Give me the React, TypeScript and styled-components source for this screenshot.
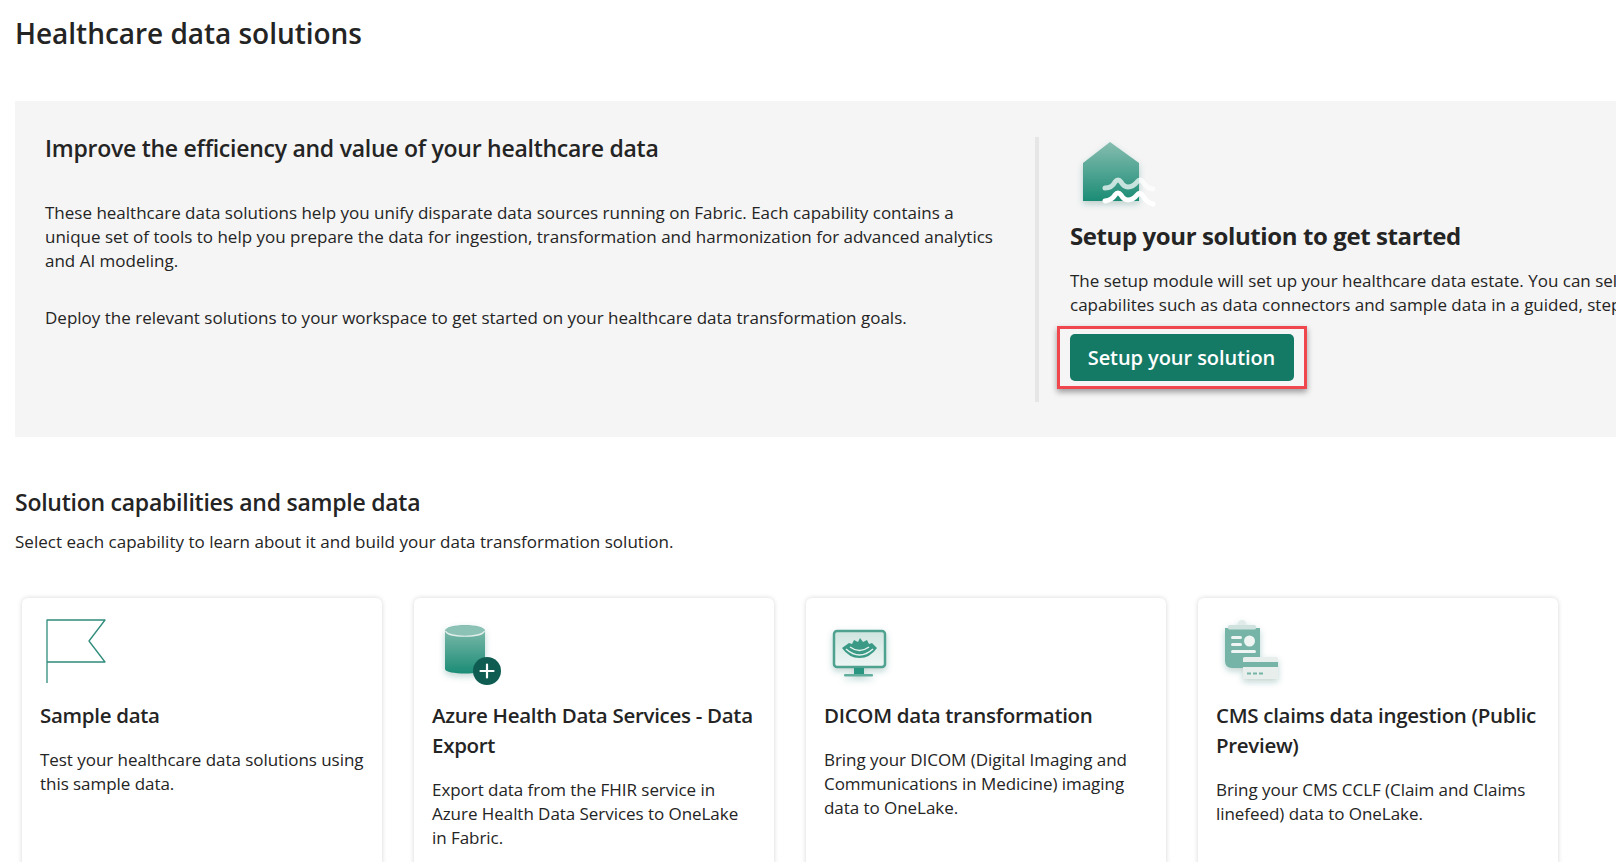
import React from "react";
import styled, { createGlobalStyle } from "styled-components";

const Global = createGlobalStyle`
  html, body { margin: 0; padding: 0; height: 862px; overflow: hidden; background: #fff; }
  body { font-family: "Open Sans", "Noto Sans", sans-serif; color: #242424; }
`;
const Page = styled.div`height: 862px; overflow: hidden; background: #fff;`;
const Title = styled.h1`
  margin: 0; padding: 15px 0 0 15px; height: 101px; box-sizing: border-box;
  font-size: 28px; line-height: 36px; font-weight: 600; letter-spacing: -0.03px; color: #242424;
`;
const Panel = styled.section`
  margin: 0 8px 0 15px; height: 336px; box-sizing: border-box; background: #f5f5f5;
  display: flex; overflow: hidden; padding: 31px 0 0 30px;
`;
const Intro = styled.div`width: 990px; flex: none;`;
const PanelHeading = styled.h2`
  margin: 0 0 37px; font-size: 23px; line-height: 32px; font-weight: 600; letter-spacing: -0.26px;
`;
const Para = styled.p`
  margin: 0 0 33px; width: 950px; font-size: 17px; line-height: 24px; letter-spacing: 0; color: #242424;
`;
const Setup = styled.div`
  flex: none; width: 560px; height: 265px; margin-top: 5px; border-left: 4px solid #e6e6e6;
  padding-left: 31px; box-sizing: border-box; display: flex; flex-direction: column; align-items: flex-start;
`;
const SetupIcon = styled.svg`display: block; width: 110px; height: 78px; flex: none;`;
const SetupHeading = styled.h2`
  margin: 4px 0 16px; font-size: 24px; line-height: 34px; font-weight: 700; letter-spacing: -0.4px; white-space: nowrap;
`;
const SetupLine = styled.div`font-size: 17px; line-height: 24px; letter-spacing: 0; white-space: nowrap;`;
const Highlight = styled.div`
  margin: 9px 0 0 -13.5px; padding: 5px 10px; border: 3px solid #f0474f;
  box-shadow: 0 3px 6px rgba(0,0,0,.38);
`;
const PrimaryButton = styled.button`
  display: block; width: 224px; height: 47px; border: 0; border-radius: 5px; background: #147a66; color: #fff;
  font-family: inherit; font-size: 20px; font-weight: 600; letter-spacing: -0.07px; padding: 0;
`;
const Section = styled.section`padding: 49px 0 0 15px;`;
const SectionHeading = styled.h2`
  margin: 0; font-size: 23px; line-height: 32px; font-weight: 600; letter-spacing: -0.25px;
`;
const SectionSub = styled.p`margin: 12px 0 0; font-size: 17px; line-height: 24px; letter-spacing: 0.02px;`;
const Cards = styled.div`
  display: grid; grid-template-columns: repeat(4, 360px); column-gap: 32px; margin: 44px 0 0 7px;
`;
const Card = styled.article`
  height: 320px; box-sizing: border-box; padding: 13px 18px 0; background: #fff; border-radius: 6px;
  box-shadow: 0 0 5px rgba(0,0,0,.16);
`;
const CardIcon = styled.svg`display: block; width: 100px; height: 80px; margin-bottom: 9px;`;
const CardTitle = styled.h3`
  margin: 0 0 18px; font-size: 20.5px; line-height: 30px; font-weight: 600; letter-spacing: -0.3px;
`;
const CardText = styled.p`margin: 0; font-size: 17px; line-height: 24px; letter-spacing: -0.05px;`;

const Defs = ({ id }: { id: string }) => (
  <defs>
    <linearGradient id={id} x1="0" y1="0" x2="0" y2="1">
      <stop offset="0" stopColor="#86bdb0" />
      <stop offset="1" stopColor="#1b8c75" />
    </linearGradient>
    <filter id={id + "s"} x="-30%" y="-30%" width="160%" height="170%">
      <feDropShadow dx="0" dy="3" stdDeviation="3" floodColor="#1b6b5c" floodOpacity=".28" />
    </filter>
  </defs>
);

const HouseIcon = () => (
  <SetupIcon viewBox="0 0 110 78">
    <Defs id="hg" />
    <path d="M13 26L40 5L69 26V64H13Z" fill="url(#hg)" filter="url(#hgs)" />
    <path d="M35 51Q42 51 45 45Q48 41 51 45Q54 50 58 50Q63 50 67 45Q70 41 73 45Q76 51 83 52" fill="none" stroke="#fff" strokeOpacity=".72" strokeWidth="5" strokeLinecap="round" />
    <path d="M35 64Q42 63 45 58Q48 54 51 58Q54 63 58 63Q63 63 67 58Q70 54 73 59Q76 65 83 67" fill="none" stroke="#fff" strokeWidth="5" strokeLinecap="round" />
  </SetupIcon>
);
const FlagIcon = () => (
  <CardIcon viewBox="0 0 100 80">
    <path d="M7 72V9H65L49 30L65 51H7" fill="none" stroke="#2e8c7b" strokeWidth="1.3" strokeLinejoin="round" />
  </CardIcon>
);
const DbIcon = () => (
  <CardIcon viewBox="0 0 100 80">
    <Defs id="dg" />
    <path d="M13 20C13 12 53 12 53 20V58C53 64 13 64 13 58Z" fill="url(#dg)" filter="url(#dgs)" />
    <ellipse cx="33" cy="20" rx="19.5" ry="5.5" fill="#8cc2b6" />
    <path d="M13.5 20C16 27 50 27 52.5 20" fill="none" stroke="#e4efec" strokeWidth="1.2" />
    <circle cx="55" cy="60" r="14" fill="#0f5c52" />
    <path d="M55 53.5V66.5M48.5 60H61.5" stroke="#fff" strokeWidth="2.2" strokeLinecap="round" />
  </CardIcon>
);
const MonitorIcon = () => (
  <CardIcon viewBox="0 0 100 80">
    <Defs id="mg" />
    <linearGradient id="ms" x1="0" y1="0" x2="0" y2="1">
      <stop offset="0" stopColor="#cfe5df" />
      <stop offset="1" stopColor="#eef6f4" />
    </linearGradient>
    <g filter="url(#mgs)">
      <rect x="10" y="20" width="51" height="36" rx="3" fill="url(#ms)" stroke="#4fa290" strokeWidth="2.5" />
      <rect x="30" y="57" width="10" height="7" fill="#2c9580" />
      <rect x="20" y="63" width="29" height="2.5" rx="1" fill="#62ae9d" />
    </g>
    <path d="M18 37L25 32L28 33L30 29L34 31L36 27L39 31L43 29L45 33L48 32L53 37Q46 47 35.5 47Q25 47 18 37Z" fill="#3a9a86" />
    <path d="M22 38Q35.5 50 49 38" fill="none" stroke="#e5f1ee" strokeWidth="1.6" />
    <path d="M26 36Q35.5 43 45 36" fill="none" stroke="#e5f1ee" strokeWidth="1.4" />
  </CardIcon>
);
const ClaimIcon = () => (
  <CardIcon viewBox="0 0 100 80">
    <Defs id="cg" />
    <g filter="url(#cgs)" transform="translate(0 -7)">
      <path d="M9 24H44V64H16Q9 64 9 57Z" fill="#74b4a6" />
      <circle cx="26" cy="20" r="4" fill="#e1ebe9" />
      <rect x="12" y="21" width="28" height="4.5" rx="1.5" fill="#cfe2dd" />
      <rect x="15" y="32" width="11" height="3" rx="1.5" fill="#eef5f3" />
      <rect x="15" y="39" width="11" height="3" rx="1.5" fill="#eef5f3" />
      <circle cx="33.5" cy="37" r="5.5" fill="#eef5f3" />
      <rect x="15" y="46" width="25" height="3" rx="1.5" fill="#eef5f3" />
      <rect x="27" y="53" width="35" height="22" rx="1.5" fill="#e7eeec" />
      <rect x="27" y="58" width="35" height="5" fill="#74b4a6" />
      <rect x="31" y="68.5" width="4" height="2" fill="#74b4a6" />
      <rect x="37" y="68.5" width="4" height="2" fill="#74b4a6" />
      <rect x="43" y="68.5" width="4" height="2" fill="#74b4a6" />
    </g>
  </CardIcon>
);

const cards = [
  { icon: <FlagIcon />, title: "Sample data", text: "Test your healthcare data solutions using this sample data." },
  { icon: <DbIcon />, title: "Azure Health Data Services - Data Export", text: "Export data from the FHIR service in Azure Health Data Services to OneLake in Fabric." },
  { icon: <MonitorIcon />, title: "DICOM data transformation", text: "Bring your DICOM (Digital Imaging and Communications in Medicine) imaging data to OneLake." },
  { icon: <ClaimIcon />, title: "CMS claims data ingestion (Public Preview)", text: "Bring your CMS CCLF (Claim and Claims linefeed) data to OneLake." },
];

export default function App() {
  return (
    <Page>
      <Global />
      <Title>Healthcare data solutions</Title>
      <Panel>
        <Intro>
          <PanelHeading>Improve the efficiency and value of your healthcare data</PanelHeading>
          <Para>These healthcare data solutions help you unify disparate data sources running on Fabric. Each capability contains a unique set of tools to help you prepare the data for ingestion, transformation and harmonization for advanced analytics and AI modeling.</Para>
          <Para>Deploy the relevant solutions to your workspace to get started on your healthcare data transformation goals.</Para>
        </Intro>
        <Setup>
          <HouseIcon />
          <SetupHeading>Setup your solution to get started</SetupHeading>
          <SetupLine>The setup module will set up your healthcare data estate. You can select</SetupLine>
          <SetupLine>capabilites such as data connectors and sample data in a guided, step-by-step</SetupLine>
          <Highlight><PrimaryButton>Setup your solution</PrimaryButton></Highlight>
        </Setup>
      </Panel>
      <Section>
        <SectionHeading>Solution capabilities and sample data</SectionHeading>
        <SectionSub>Select each capability to learn about it and build your data transformation solution.</SectionSub>
        <Cards>
          {cards.map((c) => (
            <Card key={c.title}>
              {c.icon}
              <CardTitle>{c.title}</CardTitle>
              <CardText>{c.text}</CardText>
            </Card>
          ))}
        </Cards>
      </Section>
    </Page>
  );
}
